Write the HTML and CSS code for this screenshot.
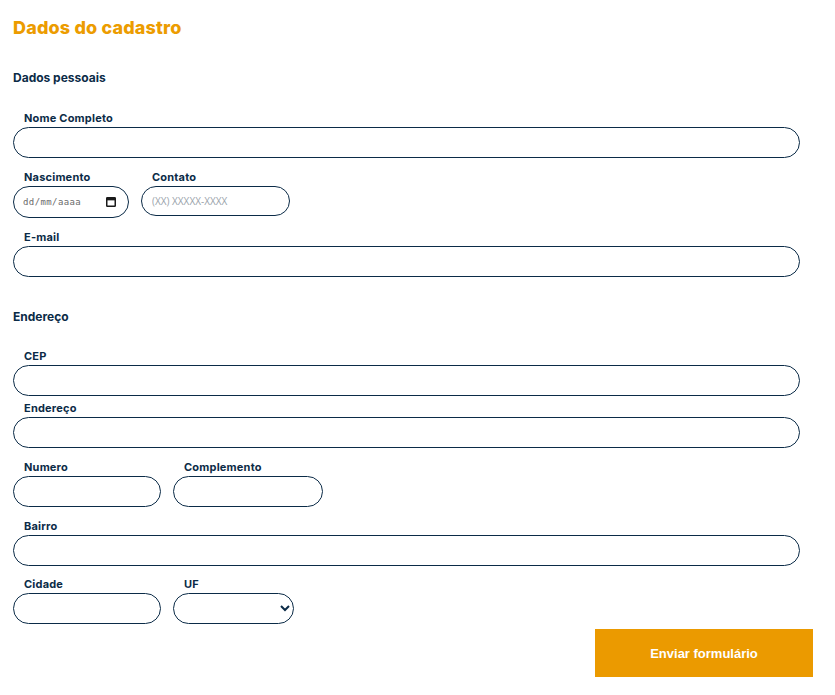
FILE: index.html
```html
<!DOCTYPE html>
<html lang="pt-BR">
<head>
<meta charset="utf-8">
<title>Dados do cadastro</title>
<link rel="stylesheet" href="styles.css">
</head>
<body>
<form class="form">
  <h1 class="title">Dados do cadastro</h1>

  <h2 class="section section-first">Dados pessoais</h2>
  <div class="row row-first">
    <div class="field field-full">
      <label class="label">Nome Completo</label>
      <input class="input" type="text">
    </div>
  </div>
  <div class="row">
    <div class="field w-date">
      <label class="label">Nascimento</label>
      <div class="date-wrap">
        <input class="input input-date" type="text" placeholder="dd/mm/aaaa">
        <svg class="cal-icon" width="10" height="10" viewBox="0 0 10 10" aria-hidden="true">
          <rect x="0.75" y="0.75" width="8.5" height="8.5" rx="0.6" fill="none" stroke="#1a1a1a" stroke-width="1.5"/>
          <rect x="0.75" y="0.75" width="8.5" height="2.6" fill="#1a1a1a"/>
        </svg>
      </div>
    </div>
    <div class="field w-149">
      <label class="label">Contato</label>
      <input class="input input-tel" type="tel" placeholder="(XX) XXXXX-XXXX">
    </div>
  </div>
  <div class="row">
    <div class="field field-full">
      <label class="label">E-mail</label>
      <input class="input" type="email">
    </div>
  </div>

  <h2 class="section section-second">Endereço</h2>
  <div class="row row-first2">
    <div class="field field-full">
      <label class="label">CEP</label>
      <input class="input" type="text">
    </div>
  </div>
  <div class="row row-tight">
    <div class="field field-full">
      <label class="label">Endereço</label>
      <input class="input" type="text">
    </div>
  </div>
  <div class="row">
    <div class="field w-148">
      <label class="label">Numero</label>
      <input class="input" type="text">
    </div>
    <div class="field w-150">
      <label class="label">Complemento</label>
      <input class="input" type="text">
    </div>
  </div>
  <div class="row">
    <div class="field field-full">
      <label class="label">Bairro</label>
      <input class="input" type="text">
    </div>
  </div>
  <div class="row row-last">
    <div class="field w-148">
      <label class="label">Cidade</label>
      <input class="input" type="text">
    </div>
    <div class="field w-122">
      <label class="label">UF</label>
      <select class="input select">
        <option></option>
      </select>
    </div>
  </div>

  <div class="actions">
    <button class="submit" type="submit">Enviar formulário</button>
  </div>
</form>
</body>
</html>
```

FILE: styles.css
```css
* { box-sizing: border-box; }

html, body {
  margin: 0;
  padding: 0;
  background: #ffffff;
}

.form {
  display: flex;
  flex-direction: column;
  padding: 0 22px 0 13px;
  font-family: "Inter", "DejaVu Sans", sans-serif;
  color: #0b2b47;
}

.title {
  margin: 18px 0 0;
  font-size: 18px;
  line-height: 20px;
  font-weight: 800;
  letter-spacing: 0.15px;
  color: #ec9c00;
}

.section {
  margin: 0;
  font-size: 12px;
  line-height: 16px;
  font-weight: 700;
  color: #0b2b47;
}

.section-first { margin-top: 32px; }
.section-second { margin-top: 32px; }

.row {
  display: flex;
  gap: 12px;
  margin-top: 12px;
}

.row-first { margin-top: 25px; }
.row-first2 { margin-top: 24px; }
.row-tight { margin-top: 5px; }
.row-last { margin-top: 11px; }

.field {
  display: flex;
  flex-direction: column;
  gap: 2px;
}

.field-full { width: calc(100% - 13px); }
.w-date { width: 116px; }
.w-148 { width: 148px; }
.w-149 { width: 149px; }
.w-150 { width: 150px; }
.w-122 { width: 121px; }

.label {
  padding-left: 11px;
  font-size: 11px;
  line-height: 14px;
  font-weight: 700;
  letter-spacing: 0.2px;
  color: #0b2b47;
}

.input {
  width: 100%;
  height: 31px;
  margin: 0;
  padding: 0 10px;
  border: 1px solid #0b2b47;
  border-radius: 16px;
  background: #ffffff;
  font-family: "Open Sans", sans-serif;
  font-size: 10px;
  color: #0b2b47;
  outline: none;
}

.date-wrap {
  position: relative;
  display: flex;
}

.input-date {
  height: 32px;
  padding: 0 24px 0 9px;
  font-family: "DejaVu Sans Mono", monospace;
  font-size: 9px;
  letter-spacing: 0.4px;
}

.input-date::placeholder {
  color: #6b6b6b;
}

.cal-icon {
  position: absolute;
  right: 13px;
  top: 11px;
}

.input-tel {
  height: 30px;
}

.input-tel::placeholder {
  color: #9aa3ab;
  font-family: "Open Sans", sans-serif;
  font-size: 10px;
}

.select {
  padding: 0 6px 0 10px;
}

.actions {
  display: flex;
  justify-content: flex-end;
  margin-top: 5px;
}

.submit {
  width: 218px;
  height: 48px;
  border: none;
  border-radius: 0;
  background: #eb9a00;
  color: #ffffff;
  font-family: "Liberation Sans", Arial, sans-serif;
  font-size: 13px;
  font-weight: 700;
  cursor: pointer;
}
```
